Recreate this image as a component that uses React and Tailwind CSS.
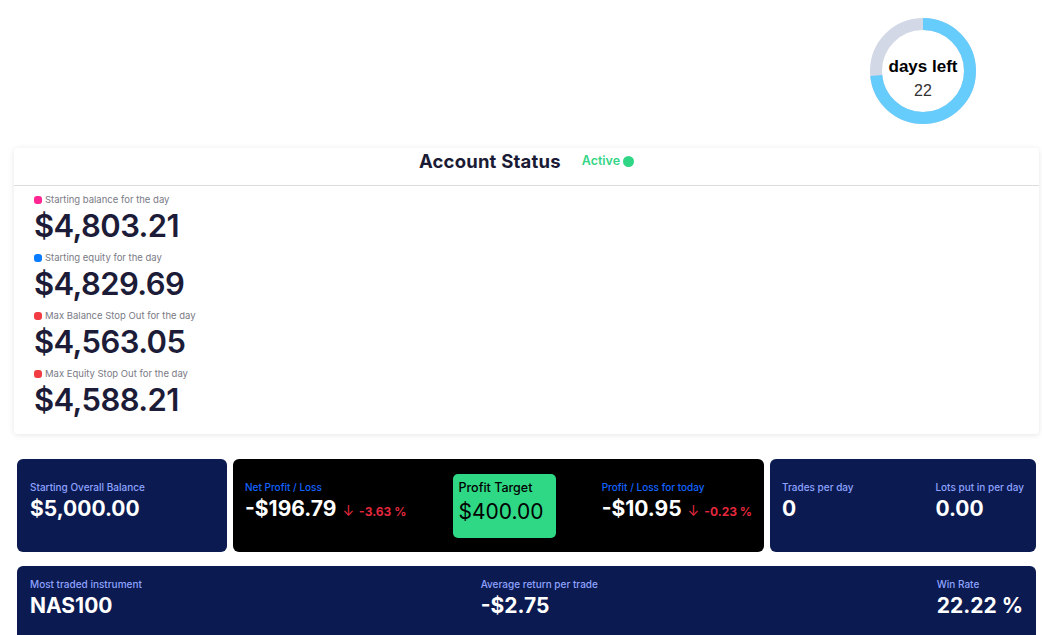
import React from 'react';

const font = { fontFamily: 'Inter, "Noto Sans", sans-serif' };

const DaysLeft = ({ left = 22, total = 30 }) => {
  const r = 47;
  const c = 2 * Math.PI * r;
  const frac = left / total;
  return (
    <div className="relative w-[108px] h-[108px]">
      <svg width="108" height="108" viewBox="0 0 108 108" className="absolute inset-0">
        <circle cx="54" cy="54" r={r} fill="none" stroke="#d3d8e6" strokeWidth="12" />
        <circle
          cx="54"
          cy="54"
          r={r}
          fill="none"
          stroke="#65ccfc"
          strokeWidth="12"
          strokeDasharray={`${c * frac} ${c}`}
          transform="rotate(-90 54 54)"
        />
      </svg>
      <div className="absolute inset-0 flex flex-col items-center justify-center pt-[14px]" style={{ fontFamily: '"Liberation Sans", Arial, sans-serif' }}>
        <div className="text-[17px] font-bold text-black leading-none">days left</div>
        <div className="text-[16px] text-[#333] leading-none mt-[8px]">22</div>
      </div>
    </div>
  );
};

const StatusItem = ({ dot, label, value }) => (
  <div>
    <div className="flex items-center gap-[3px] h-[14px]">
      <span className={`w-[8px] h-[8px] rounded-[3px] ${dot}`} />
      <span className="text-[9.5px] text-[#7a7a85]">{label}</span>
    </div>
    <div className="text-[31px] font-semibold text-[#1c1c38] leading-[38px] tracking-[-0.6px]">{value}</div>
    <div className="h-[6px]" />
  </div>
);

const Stat = ({ label, value, labelColor = 'text-[#8ea3ff]', children }) => (
  <div>
    <div className={`text-[10px] font-medium ${labelColor} leading-[14px]`}>{label}</div>
    <div className="flex items-baseline gap-[6px] mt-[3px]">
      <span className="text-[21px] font-bold text-white leading-[24px]">{value}</span>
      {children}
    </div>
  </div>
);

const Change = ({ v }) => (
  <span className="text-[12px] font-bold text-[#e4283e] flex items-baseline gap-[5px]">
    <span className="font-normal text-[14px]">↓</span>
    {v}
  </span>
);

export default function App() {
  return (
    <div className="w-[1042px] h-[635px] bg-white overflow-hidden" style={font}>
      <div className="flex justify-end pr-[65px] pt-[17px] h-[148px]">
        <DaysLeft />
      </div>

      <div className="ml-[14px] w-[1025px] bg-white rounded-[4px] shadow-[0_1px_6px_rgba(0,0,0,0.1)] pb-[9px]">
        <div className="h-[38px] flex items-start pt-[1px] justify-center border-b border-[#dcdcdc]">
          <span className="text-[18.5px] font-bold text-[#1b1b35] leading-[24px] tracking-[0.2px]">Account Status</span>
          <span className="ml-[21px] text-[12.5px] font-semibold text-[#33d585] leading-[24px]">Active</span>
          <span className="ml-[3px] mt-[7px] w-[11px] h-[11px] rounded-full bg-[#2fd685]" />
        </div>
        <div className="pl-[20px] pt-[7px]">
          <StatusItem dot="bg-[#ff2694]" label="Starting balance for the day" value="$4,803.21" />
          <StatusItem dot="bg-[#0a7cff]" label="Starting equity for the day" value="$4,829.69" />
          <StatusItem dot="bg-[#f23c44]" label="Max Balance Stop Out for the day" value="$4,563.05" />
          <StatusItem dot="bg-[#f23c44]" label="Max Equity Stop Out for the day" value="$4,588.21" />
        </div>
      </div>

      <div className="ml-[17px] w-[1019px] mt-[25px] flex gap-[6px] h-[93px]">
        <div className="w-[210px] shrink-0 bg-[#0b1a50] rounded-[6px] px-[13px] pb-[10px] flex items-center">
          <Stat label="Starting Overall Balance" value="$5,000.00" />
        </div>
        <div className="w-[531px] shrink-0 bg-black rounded-[6px] px-[12px] flex items-center justify-between">
          <div className="pb-[10px]">
            <Stat label="Net Profit / Loss" labelColor="text-[#1463ff]" value="-$196.79">
              <Change v="-3.63 %" />
            </Stat>
          </div>
          <div className="w-[103px] h-[64px] bg-[#2fd884] rounded-[5px] px-[6px] pt-[6px]">
            <div className="text-[12.5px] font-medium text-black leading-[16px]">Profit Target</div>
            <div className="text-[21px] text-black leading-[28px] mt-[2px]">$400.00</div>
          </div>
          <div className="pb-[10px]">
            <Stat label="Profit / Loss for today" labelColor="text-[#1463ff]" value="-$10.95">
              <Change v="-0.23 %" />
            </Stat>
          </div>
        </div>
        <div className="w-[266px] shrink-0 bg-[#0b1a50] rounded-[6px] px-[12px] pb-[10px] flex items-center justify-between">
          <Stat label="Trades per day" value="0" />
          <Stat label="Lots put in per day" value="0.00" />
        </div>
      </div>

      <div className="ml-[17px] w-[1019px] mt-[14px] h-[80px] bg-[#0b1a50] rounded-[6px] px-[13px] pt-[11px] flex justify-between">
        <Stat label="Most traded instrument" value="NAS100" />
        <Stat label="Average return per trade" value="-$2.75" />
        <div className="text-right">
          <div className="text-[10px] font-medium text-[#8ea3ff] leading-[14px] text-left">Win Rate</div>
          <div className="text-[21px] font-bold text-white leading-[24px] mt-[3px]">22.22 %</div>
        </div>
      </div>
    </div>
  );
}
